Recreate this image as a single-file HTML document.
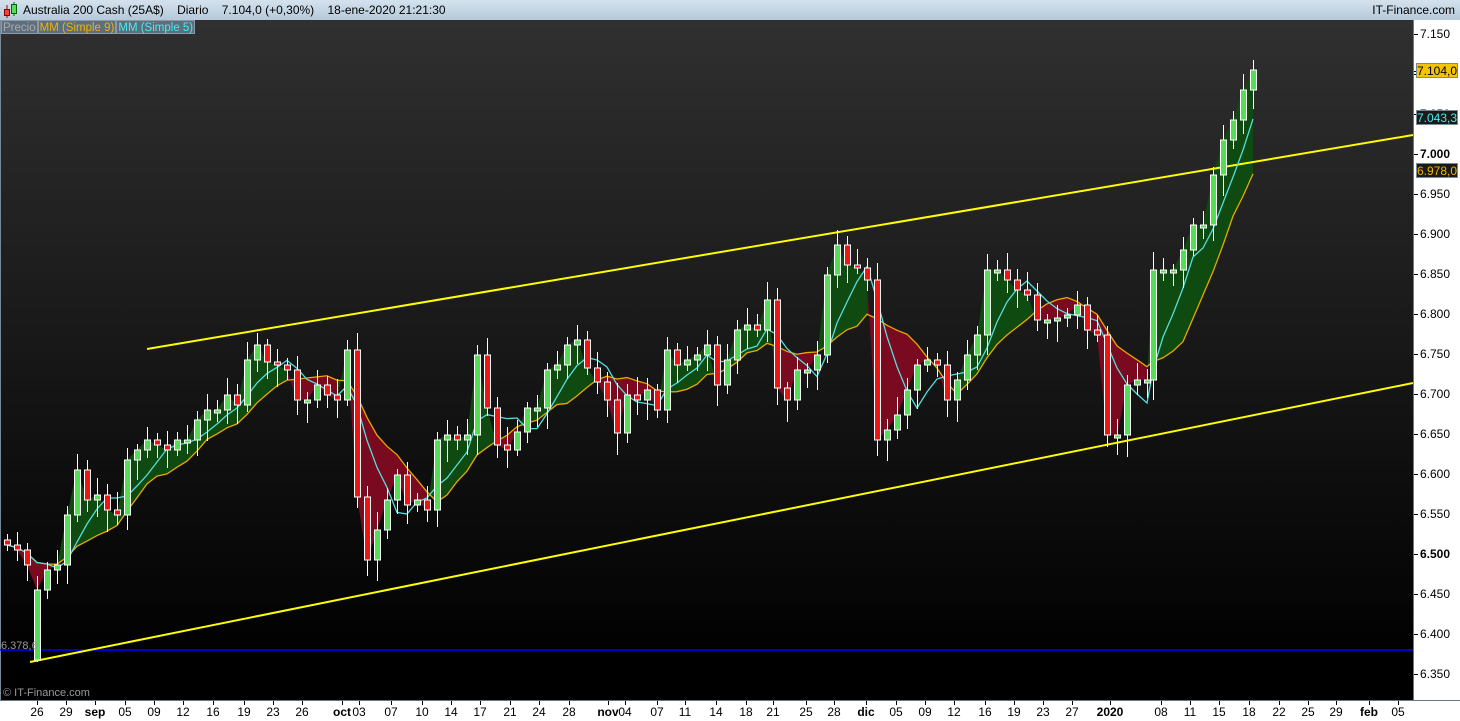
<!DOCTYPE html>
<html><head><meta charset="utf-8"><style>
html,body{margin:0;padding:0;width:1460px;height:720px;overflow:hidden;background:#fff;font-family:"Liberation Sans",sans-serif}
#top{position:absolute;left:0;top:0;width:1460px;height:20px;background:linear-gradient(#d4e2ee,#b6c9da);border-bottom:1px solid #8aa;font-size:12px;color:#000;line-height:20px}
#chart{position:absolute;left:0;top:20px;width:1413px;height:680px;background:linear-gradient(#303030,#000 95%);border-left:1px solid #789;box-sizing:border-box}
#leg{position:absolute;left:1px;top:20px;height:14px;font-size:11.5px;line-height:14px;display:flex}
#leg span{background:#5f6e7c;border:1px solid #8a9aa8;padding:0 1px;margin-right:0}
#axis{position:absolute;left:1413px;top:20px;width:47px;height:680px;background:#fff;border-left:1px solid #6a7a8a}
#bot{position:absolute;left:0;top:700px;width:1460px;height:20px;background:#fff;border-top:1px solid #6a7a8a;font-size:12px}
.yl{position:absolute;left:6px;font-size:12px;color:#000;transform:translateY(-7px)}
.tk{position:absolute;left:0;width:4px;height:1px;background:#000}
.bx{position:absolute;left:2px;width:42px;height:15px;font-size:12px;line-height:15px;text-align:center;border:1px solid #7a8a9a;box-sizing:border-box;transform:translateY(-8px)}
.xl{position:absolute;top:4px;transform:translateX(-50%);color:#000}
.xt{position:absolute;top:0;width:1px;height:4px;background:#000}
</style></head><body>
<div id="top"><svg style="position:absolute;left:3px;top:2px" width="16" height="16"><line x1="4" y1="3" x2="4" y2="16" stroke="#a00"/><rect x="1.5" y="7.5" width="5" height="6" fill="#e44" stroke="#800"/><line x1="11" y1="0" x2="11" y2="14" stroke="#060"/><rect x="8.5" y="2.5" width="5" height="9" fill="#5d5" stroke="#060"/></svg>
<span style="position:absolute;left:23px">Australia 200 Cash (25A$)&nbsp;&nbsp;&nbsp;&nbsp;Diario&nbsp;&nbsp;&nbsp;&nbsp;7.104,0 (+0,30%)&nbsp;&nbsp;&nbsp;&nbsp;18-ene-2020 21:21:30</span>
<span style="position:absolute;right:5px">IT-Finance.com</span></div>
<div id="chart"><svg id="sv" width="1413" height="680" style="position:absolute;left:-1px;top:0"></svg>
<div style="position:absolute;left:2px;top:667px;font-size:11px;color:#999">© IT-Finance.com</div>
<div style="position:absolute;left:0px;top:620px;font-size:11px;color:#999">6.378,6</div></div>
<div id="leg"><span style="color:#aaa">Precio</span><span style="color:#f0b400">MM (Simple 9)</span><span style="color:#4ee">MM (Simple 5)</span></div>
<div id="axis"></div>
<div id="bot"></div>
<script>
var ax=document.getElementById('axis'),h='';
for(var i=0;i<=16;i++){var p=7.15-i*0.05;var yy=34+i*40-20;var s=p.toFixed(3);var b=(s=="7.000"||s=="6.500");
 if(s!="7.100") h+='<div class="yl" style="top:'+yy+'px;'+(b?'font-weight:bold':'')+'">'+s+'</div>';h+='<div class="tk" style="top:'+yy+'px"></div>';}
h+='<div class="tk" style="top:51px"></div>';
h+='<div class="bx" style="top:51px;background:#f5c400;color:#000">7.104,0</div>';
h+='<div class="bx" style="top:98px;background:#1a1a1a;color:#4ee">7.043,3</div>';
h+='<div class="bx" style="top:151px;background:#1a1a1a;color:#f0b400">6.978,0</div>';
ax.innerHTML=h;
var L=[[37,'26'],[66,'29'],[95,'sep',1],[125,'05'],[154,'09'],[183,'12'],[213,'16'],[244,'19'],[273,'23'],[302,'26'],[342,'oct',1],[359,'03'],[391,'07'],[422,'10'],[451,'14'],[480,'17'],[510,'21'],[539,'24'],[569,'28'],[608,'nov',1],[625,'04'],[657,'07'],[685,'11'],[716,'14'],[746,'18'],[773,'21'],[806,'25'],[834,'28'],[866,'dic',1],[896,'05'],[925,'09'],[954,'12'],[985,'16'],[1014,'19'],[1043,'23'],[1072,'27'],[1110,'2020',1],[1161,'08'],[1190,'11'],[1219,'15'],[1249,'18'],[1279,'22'],[1308,'25'],[1336,'29'],[1369,'feb',1],[1398,'05']];
h='';L.forEach(function(l){h+='<div class="xt" style="left:'+l[0]+'px"></div><div class="xl" style="left:'+l[0]+'px;'+(l[2]?'font-weight:bold':'')+'">'+l[1]+'</div>'});
document.getElementById('bot').innerHTML=h;
var C=[[7,545],[17,550],[27,565],[37,590],[47,570],[57,565],[67,515],[77,470],[87,500],[97,495],[107,510],[117,515],[127,460],[137,450],[147,440],[157,445],[167,450],[177,440],[187,440],[197,420],[207,410],[217,410],[227,395],[237,405],[247,360],[257,345],[267,362],[277,365],[287,370],[297,400],[307,400],[317,385],[327,395],[337,400],[347,350],[357,497],[367,560],[377,530],[387,500],[397,475],[407,505],[417,500],[427,510],[437,440],[447,435],[457,440],[467,435],[477,355],[487,408],[497,445],[507,450],[517,432],[527,408],[537,408],[547,370],[557,365],[567,345],[577,340],[587,368],[597,382],[607,400],[617,433],[627,395],[637,400],[647,390],[657,410],[667,350],[677,365],[687,360],[697,355],[707,345],[717,385],[727,360],[737,330],[747,325],[757,330],[767,300],[777,388],[787,400],[797,370],[807,370],[817,355],[827,275],[837,245],[847,265],[857,268],[867,280],[877,440],[887,430],[897,415],[907,390],[917,365],[927,360],[937,365],[947,400],[957,380],[967,355],[977,335],[987,270],[997,270],[1007,280],[1017,290],[1027,295],[1037,320],[1047,320],[1057,318],[1067,315],[1077,305],[1087,330],[1097,335],[1107,435],[1117,435],[1127,385],[1137,380],[1147,380],[1153,270],[1163,270],[1173,270],[1183,250],[1193,225],[1203,225],[1213,175],[1223,140],[1233,120],[1243,90],[1253,70]];
var OV={3:660,4:590};
var o=-20;
var sv=document.getElementById('sv'),g='';
function sma(n,i){var s=0,c=0;for(var k=Math.max(0,i-n+1);k<=i;k++){s+=C[k][1];c++}return s/c}
var m5=[],m9=[];for(var i=0;i<C.length;i++){m5.push(sma(5,i)+o);m9.push(sma(9,i)+o)}
for(var i=1;i<C.length;i++){var x0=C[i-1][0],x1=C[i][0],c0=C[i-1][1]+o,c1=C[i][1]+o;var up=(c0+c1)<(m9[i-1]+m9[i]);
 g+='<polygon points="'+x0+','+c0+' '+x1+','+c1+' '+x1+','+m9[i]+' '+x0+','+m9[i-1]+'" fill="'+(up?'#0f4a10':'#7a0a20')+'"/>';}
g+='<line x1="0" y1="630" x2="1413" y2="630" stroke="#0000ff" stroke-width="1.5"/>';
g+='<line x1="147" y1="329" x2="1413" y2="115" stroke="#ffff00" stroke-width="2"/>';
g+='<line x1="30" y1="642" x2="1413" y2="363" stroke="#ffff00" stroke-width="2"/>';
var p5='',p9='';for(var i=0;i<C.length;i++){p5+=C[i][0]+','+m5[i]+' ';p9+=C[i][0]+','+m9[i]+' '}
g+='<polyline points="'+p9+'" fill="none" stroke="#e8a800" stroke-width="1.3"/>';
g+='<polyline points="'+p5+'" fill="none" stroke="#55dddd" stroke-width="1.3"/>';
for(var i=0;i<C.length;i++){var x=C[i][0],c=C[i][1]+o,op=(OV[i]!==undefined?OV[i]:(i?C[i-1][1]:540))+o;if(Math.abs(c-op)<3)op=c+3;
 var t=Math.min(c,op),b=Math.max(c,op),gr=c<op;var hi=t-6-(i*7%13),lo=b+6+(i*5%17);if(i==3)lo=642;
 g+='<line x1="'+(x+.5)+'" y1="'+hi+'" x2="'+(x+.5)+'" y2="'+lo+'" stroke="#fff"/>';
 g+='<rect x="'+(x-2.5)+'" y="'+t+'" width="6" height="'+(b-t)+'" fill="'+(gr?'#55dd55':'#ee1515')+'" stroke="#fff" stroke-width="1"/>';}
sv.innerHTML=g;
</script>
</body></html>
